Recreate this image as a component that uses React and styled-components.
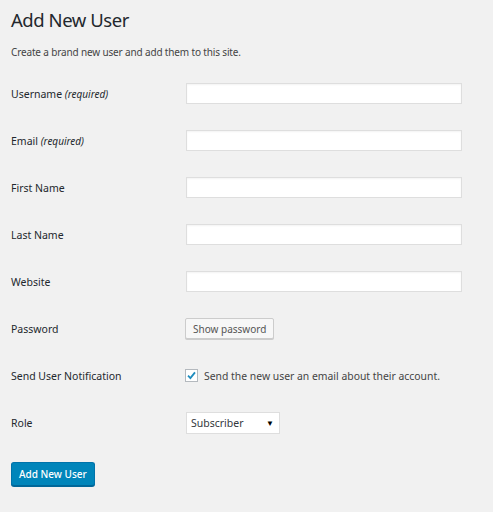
import React from 'react';
import styled, { createGlobalStyle } from 'styled-components';

const GlobalStyle = createGlobalStyle`
  html, body {
    margin: 0;
    padding: 0;
    background: #f1f1f1;
  }
  body {
    font-family: "Noto Sans", "Liberation Sans", sans-serif;
    color: #23282d;
  }
`;

const Page = styled.div`
  width: 493px;
  height: 512px;
  box-sizing: border-box;
  padding: 6px 11px 0 11px;
  background: #f1f1f1;
`;

const Title = styled.h1`
  margin: 0;
  font-size: 18.5px;
  font-weight: 400;
  line-height: 28px;
  letter-spacing: -0.45px;
  color: #23282d;
`;

const Intro = styled.p`
  margin: 10px 0 0 0;
  font-size: 10px;
  line-height: 16px;
  letter-spacing: -0.15px;
  color: #444;
`;

const FormTable = styled.div`
  display: grid;
  grid-template-columns: 175px 1fr;
  grid-auto-rows: 47px;
  align-items: center;
  margin-top: 10px;
`;

const Label = styled.label`
  font-size: 10.5px;
  font-weight: 400;
  color: #23282d;
  em {
    font-style: italic;
    font-size: 10px;
  }
`;

const Field = styled.div`
  display: flex;
  align-items: center;
`;

const TextInput = styled.input`
  box-sizing: border-box;
  width: 276px;
  height: 21px;
  margin: 0;
  border: 1px solid #dedede;
  background: #fff;
  box-shadow: inset 0 1px 2px rgba(0, 0, 0, 0.05);
  outline: none;
`;

const SecondaryButton = styled.button`
  box-sizing: border-box;
  height: 21px;
  padding: 0 7px;
  margin-left: -1px;
  font-family: inherit;
  font-size: 10px;
  color: #555;
  background: #f7f7f7;
  border: 1px solid #ccc;
  border-radius: 2px;
  box-shadow: 0 1px 0 #ccc;
`;

const CheckLabel = styled.label`
  display: flex;
  align-items: center;
  gap: 6px;
  font-size: 10.4px;
  color: #444;
`;

const CheckBox = styled.span`
  box-sizing: border-box;
  width: 13px;
  height: 13px;
  margin-left: -1px;
  border: 1px solid #b4b9be;
  background: #fff;
  display: flex;
  align-items: center;
  justify-content: center;
  svg {
    width: 11px;
    height: 11px;
  }
`;

const Select = styled.div`
  box-sizing: border-box;
  width: 94px;
  height: 22px;
  padding: 0 5px 0 4px;
  display: flex;
  align-items: center;
  justify-content: space-between;
  background: #fff;
  border: 1px solid #dedede;
  font-size: 10.5px;
  color: #32373c;
  span.arrow {
    font-size: 8px;
    color: #000;
  }
`;

const PrimaryButton = styled.button`
  box-sizing: border-box;
  margin-top: 16px;
  height: 24px;
  padding: 0 7px;
  font-family: inherit;
  font-size: 10px;
  font-weight: 500;
  color: #fff;
  background: #0085ba;
  border: 1px solid #0073aa;
  border-bottom-color: #006799;
  border-radius: 3px;
  box-shadow: 0 1px 0 #006799;
`;

const rows = [
  { label: 'Username', required: true },
  { label: 'Email', required: true },
  { label: 'First Name' },
  { label: 'Last Name' },
  { label: 'Website' },
];

export default function App() {
  return (
    <>
      <GlobalStyle />
      <Page>
        <Title>Add New User</Title>
        <Intro>Create a brand new user and add them to this site.</Intro>
        <FormTable>
          {rows.map(r => (
            <React.Fragment key={r.label}>
              <Label>
                {r.label} {r.required && <em>(required)</em>}
              </Label>
              <Field>
                <TextInput type="text" />
              </Field>
            </React.Fragment>
          ))}
          <Label>Password</Label>
          <Field>
            <SecondaryButton>Show password</SecondaryButton>
          </Field>
          <Label>Send User Notification</Label>
          <Field>
            <CheckLabel>
              <CheckBox>
                <svg viewBox="0 0 12 12">
                  <path d="M2.2 6.2 L4.8 8.8 L9.8 2.6" fill="none" stroke="#1e8cbe" strokeWidth="2" />
                </svg>
              </CheckBox>
              Send the new user an email about their account.
            </CheckLabel>
          </Field>
          <Label>Role</Label>
          <Field>
            <Select>
              <span>Subscriber</span>
              <span className="arrow">▼</span>
            </Select>
          </Field>
        </FormTable>
        <PrimaryButton>Add New User</PrimaryButton>
      </Page>
    </>
  );
}
